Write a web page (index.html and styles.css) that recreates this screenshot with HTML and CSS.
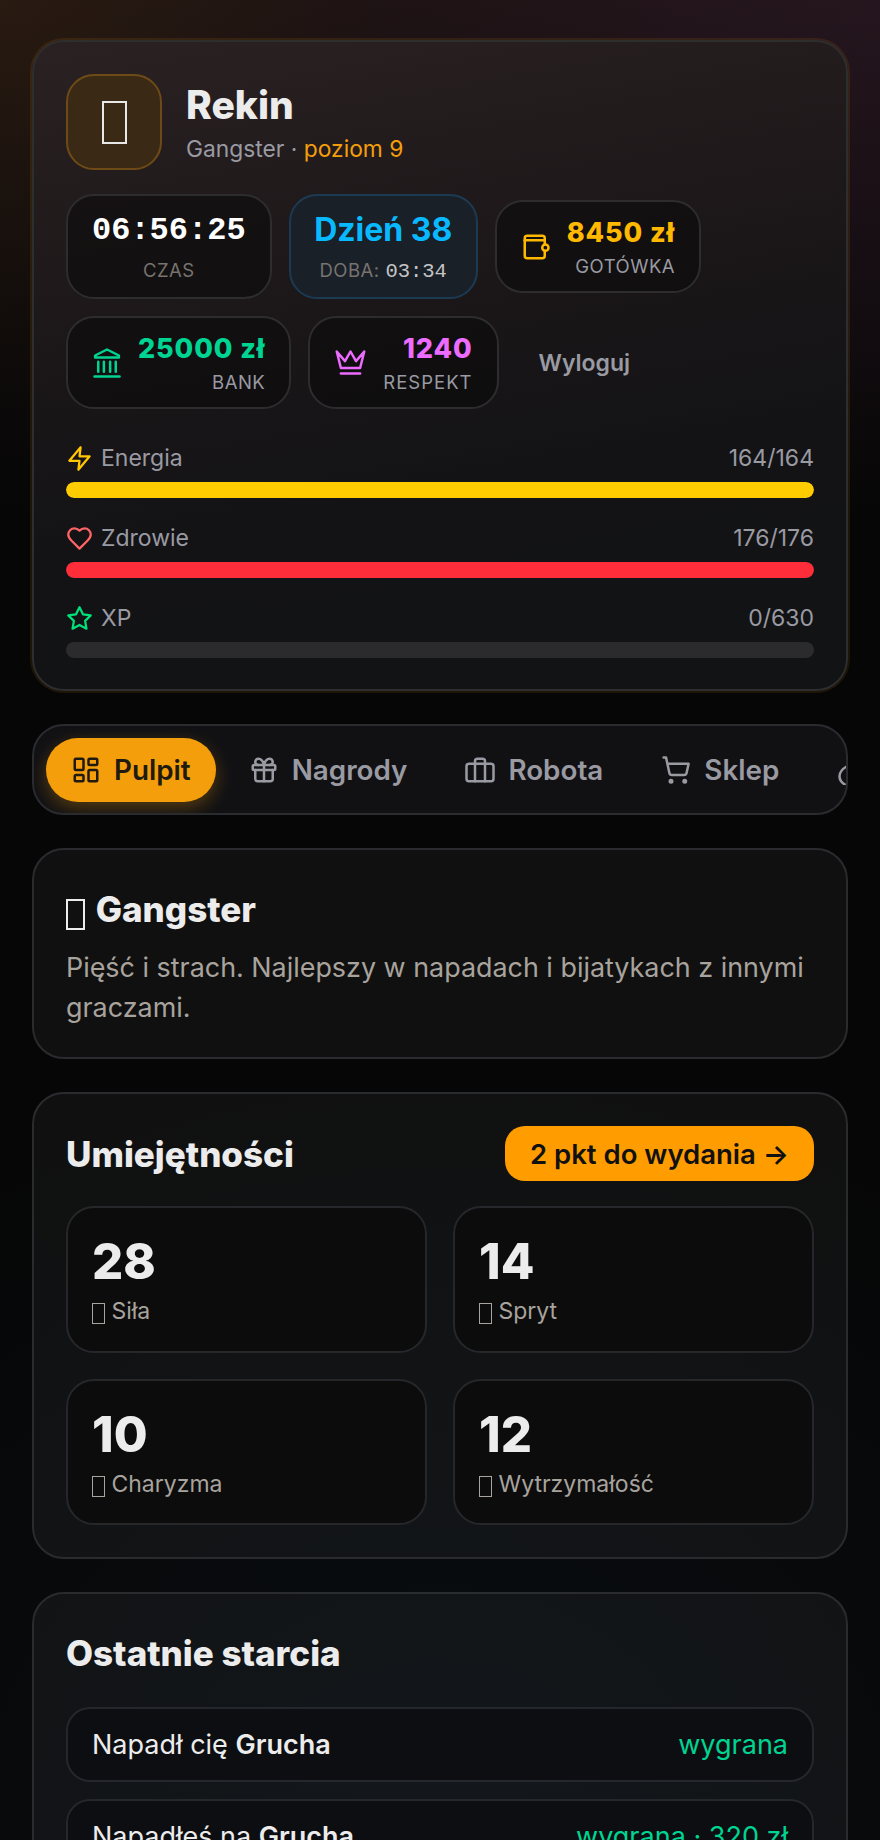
FILE: index.html
```html
<!DOCTYPE html>
<html lang="pl">
<head>
    <meta charset="UTF-8">
    <meta name="viewport" content="width=device-width, initial-scale=1.0">
    <title>Rekin</title>
    <link rel="stylesheet" href="styles.css">
</head>
<body>

    <div class="container">
        <header class="player-card">
            <div class="player">
                <div class="avatar"><span class="tofu tofu-lg"></span></div>
                <div>
                    <h1>Rekin</h1>
                    <p class="player-sub">Gangster · <span class="level">poziom 9</span></p>
                </div>
            </div>

            <div class="stats">
                <div class="stat stat-center">
                    <div class="clock">06:56:25</div>
                    <div class="stat-label">CZAS</div>
                </div>
                <div class="stat stat-center stat-day">
                    <div class="day">Dzień 38</div>
                    <div class="stat-label">DOBA: <span class="mono">03:34</span></div>
                </div>
                <div class="stat stat-money">
                    <svg class="stat-icon gold" viewBox="0 0 24 24"><path d="M19 10V5a2 2 0 0 0-2-2H5a2 2 0 0 0-2 2v14a2 2 0 0 0 2 2h12a2 2 0 0 0 2-2v-4"/><path d="M3 6.500h16"/><rect x="17" y="10" width="5" height="5" rx="2.500"/></svg>
                    <div class="stat-text">
                        <div class="stat-value gold">8450 zł</div>
                        <div class="stat-label">GOTÓWKA</div>
                    </div>
                </div>
                <div class="stat stat-money">
                    <svg class="stat-icon green" viewBox="0 0 24 24"><path d="M12 1.200 21.500 6v1.600h-19V6z"/><path d="M2 22.800h20"/><path d="M5 11v8"/><path d="M9.500 11v8"/><path d="M14.500 11v8"/><path d="M19 11v8"/></svg>
                    <div class="stat-text">
                        <div class="stat-value green">25000 zł</div>
                        <div class="stat-label">BANK</div>
                    </div>
                </div>
                <div class="stat stat-money">
                    <svg class="stat-icon stat-icon-lg pink" viewBox="0 0 24 24"><path d="m2 4 3 12h14l3-12-6 7-4-7-4 7-6-7z"/><path d="M5 20h14"/></svg>
                    <div class="stat-text">
                        <div class="stat-value pink">1240</div>
                        <div class="stat-label label-wide">RESPEKT</div>
                    </div>
                </div>
                <a class="logout">Wyloguj</a>
            </div>

            <div class="bars">
                <div class="bar-row">
                    <div class="bar-head">
                        <span class="bar-name"><svg class="bar-icon gold-bar" viewBox="0 0 24 24"><path d="M13 2 3 14h9l-1 8 10-12h-9l1-8z"/></svg>Energia</span>
                        <span>164/164</span>
                    </div>
                    <div class="bar"><div class="bar-fill fill-energy" style="width: 100%"></div></div>
                </div>
                <div class="bar-row">
                    <div class="bar-head">
                        <span class="bar-name"><svg class="bar-icon red-bar" viewBox="0 0 24 24"><path d="M19 14c1.490-1.460 3-3.210 3-5.500A5.500 5.500 0 0 0 16.500 3c-1.760 0-3 .5-4.500 2-1.500-1.500-2.740-2-4.500-2A5.500 5.500 0 0 0 2 8.500c0 2.300 1.500 4.050 3 5.500l7 7Z"/></svg>Zdrowie</span>
                        <span>176/176</span>
                    </div>
                    <div class="bar"><div class="bar-fill fill-health" style="width: 100%"></div></div>
                </div>
                <div class="bar-row">
                    <div class="bar-head">
                        <span class="bar-name"><svg class="bar-icon green-bar" viewBox="0 0 24 24"><path d="M12 2l3.090 6.260L22 9.270l-5 4.870 1.180 6.880L12 17.770l-6.180 3.250L7 14.140 2 9.270l6.910-1.010L12 2z"/></svg>XP</span>
                        <span>0/630</span>
                    </div>
                    <div class="bar"><div class="bar-fill" style="width: 0%"></div></div>
                </div>
            </div>
        </header>

        <nav class="tabs">
            <a class="tab active"><svg viewBox="0 0 24 24"><rect x="3" y="3" width="7" height="9" rx="1"/><rect x="14" y="3" width="7" height="5" rx="1"/><rect x="14" y="12" width="7" height="9" rx="1"/><rect x="3" y="16" width="7" height="5" rx="1"/></svg>Pulpit</a>
            <a class="tab"><svg viewBox="0 0 24 24"><rect x="3" y="8" width="18" height="4" rx="1"/><path d="M12 8v13"/><path d="M19 12v7a2 2 0 0 1-2 2H7a2 2 0 0 1-2-2v-7"/><path d="M7.500 8a2.500 2.500 0 0 1 0-5A4.800 8 0 0 1 12 8a4.800 8 0 0 1 4.500-5 2.500 2.500 0 0 1 0 5"/></svg>Nagrody</a>
            <a class="tab"><svg viewBox="0 0 24 24"><rect x="1.200" y="7" width="21.600" height="14" rx="2"/><path d="M16 21V5a2 2 0 0 0-2-2h-4a2 2 0 0 0-2 2v16"/></svg>Robota</a>
            <a class="tab"><svg viewBox="0 0 24 24"><circle cx="8" cy="21" r="1"/><circle cx="19" cy="21" r="1"/><path d="M2.050 2.050h2l2.660 12.420a2 2 0 0 0 2 1.580h9.780a2 2 0 0 0 1.950-1.570l1.650-7.430H5.120"/></svg>Sklep</a>
            <a class="tab"><svg viewBox="0 0 24 24"><path d="M9 8.500C4 11 2 14 2 17c0 3 2 5.500 5 7"/></svg></a>
        </nav>

        <section class="card card-spaced">
            <h2><span class="tofu tofu-md"></span> Gangster</h2>
            <p class="card-text">Pięść i strach. Najlepszy w napadach i bijatykach z innymi graczami.</p>
        </section>

        <section class="card">
            <div class="card-head">
                <h2>Umiejętności</h2>
                <a class="spend-btn">2 pkt do wydania →</a>
            </div>
            <div class="skills">
                <div class="skill">
                    <div class="skill-value">28</div>
                    <div class="skill-name"><span class="tofu tofu-sm"></span> Siła</div>
                </div>
                <div class="skill">
                    <div class="skill-value">14</div>
                    <div class="skill-name"><span class="tofu tofu-sm"></span> Spryt</div>
                </div>
                <div class="skill">
                    <div class="skill-value">10</div>
                    <div class="skill-name"><span class="tofu tofu-sm"></span> Charyzma</div>
                </div>
                <div class="skill">
                    <div class="skill-value">12</div>
                    <div class="skill-name"><span class="tofu tofu-sm"></span> Wytrzymałość</div>
                </div>
            </div>
        </section>

        <section class="card card-spaced">
            <h2 class="fights-title">Ostatnie starcia</h2>
            <div class="fights">
                <div class="fight">
                    <span>Napadł cię <b>Grucha</b></span>
                    <span class="win">wygrana</span>
                </div>
                <div class="fight">
                    <span>Napadłeś na <b>Grucha</b></span>
                    <span class="win">wygrana · 320 zł</span>
                </div>
            </div>
        </section>
    </div>

</body>
</html>
```

FILE: styles.css
```css
:root {
    --text-primary: #ececec;
    --text-muted: #9a9aa3;
    --text-soft: #a8a39d;
    --amber: #f59e0b;
}

*, *::before, *::after {
    box-sizing: border-box;
    margin: 0;
    padding: 0;
}

html, body {
    height: 1840px;
    overflow: hidden;
}

body {
    font-family: 'Inter', 'Liberation Sans', sans-serif;
    color: var(--text-primary);
    background:
        radial-gradient(ellipse 420px 420px at 0 0, rgba(245, 158, 11, 0.06), transparent 100%),
        radial-gradient(ellipse 620px 520px at 100% 0, rgba(190, 80, 230, 0.06), transparent 100%),
        linear-gradient(to bottom, rgba(46, 28, 28, 0.55), transparent 520px),
        radial-gradient(ellipse 900px 800px at 50% 100%, rgba(60, 130, 200, 0.06), transparent 100%),
        #060606;
}

.container {
    display: flex;
    flex-direction: column;
    gap: 33px;
    padding: 40px 32px;
}

/* emoji that have no glyph show up as an empty box */
.tofu {
    display: inline-block;
    border: 2px solid currentColor;
    vertical-align: middle;
}

.tofu-lg {
    width: 25px;
    height: 43px;
    color: #e8e8e8;
}

.tofu-md {
    width: 19px;
    height: 31px;
    margin-right: 3px;
    position: relative;
    top: 2px;
}

.tofu-sm {
    width: 13px;
    height: 21px;
    position: relative;
    top: 1px;
    border-width: 1.5px;
}

.player-card {
    padding: 32px 32px 31px;
    border: 2px solid #2f2e2f;
    border-radius: 32px;
    box-shadow: 0 0 0 2px rgba(245, 158, 11, 0.1);
    background: linear-gradient(170deg, #2a2122 0%, #1c1719 38%, #131315 65%, #121315 100%);
}

.player {
    display: flex;
    align-items: center;
    gap: 24px;
    margin-bottom: 24px;
}

.avatar {
    width: 96px;
    height: 96px;
    display: flex;
    align-items: center;
    justify-content: center;
    border: 2px solid #6e4b16;
    border-radius: 28px;
    background: #3a2a15;
}

h1 {
    font-size: 39px;
    line-height: 46px;
    font-weight: 800;
}

.player-sub {
    margin-top: 7px;
    font-size: 22.800px;
    color: var(--text-muted);
}

.level {
    color: var(--amber);
}

.stats {
    display: flex;
    flex-wrap: wrap;
    align-items: center;
    gap: 17px;
}

.stat {
    border: 2px solid #2d2c2e;
    border-radius: 28px;
    background: rgba(8, 8, 8, 0.5);
}

.stat-center {
    height: 105px;
    padding: 0 24px;
    display: flex;
    flex-direction: column;
    align-items: center;
    justify-content: center;
    gap: 10px;
}

.stat-day {
    padding: 0 23.500px;
    border-color: #1c3a52;
    background: #1a2028;
}

.clock {
    font-family: 'Liberation Mono', monospace;
    font-size: 32px;
    font-weight: 700;
    color: #fff;
}

.day {
    font-size: 32px;
    font-weight: 700;
    color: #09b9ff;
}

.mono {
    font-family: 'Liberation Mono', monospace;
    font-size: 20.500px;
    letter-spacing: 0;
    color: #c4c4c4;
}

.stat-label {
    font-size: 18.500px;
    letter-spacing: 0.5px;
    color: #77736f;
}

.label-wide {
    letter-spacing: 1px;
}

.stat-money {
    height: 93px;
    padding: 0 24px;
    display: flex;
    align-items: center;
    gap: 16px;
}

.stat-text {
    display: flex;
    flex-direction: column;
    align-items: flex-end;
    gap: 6px;
}

.stat-text .stat-label {
    color: var(--text-muted);
}

.stat-value {
    font-size: 27px;
    font-weight: 800;
    letter-spacing: 0.9px;
}

.stat-icon {
    width: 30px;
    height: 30px;
    fill: none;
    stroke: currentColor;
    stroke-width: 2;
    stroke-linecap: round;
    stroke-linejoin: round;
    flex-shrink: 0;
}

.stat-icon-lg {
    width: 33px;
    height: 33px;
    stroke-width: 1.800;
}

.gold { color: #ffb900; }
.green { color: #00d492; }
.pink { color: #ed6bff; }

.logout {
    margin-left: 23px;
    font-size: 23px;
    font-weight: 600;
    color: var(--text-muted);
}

.bars {
    margin-top: 37px;
    display: flex;
    flex-direction: column;
    gap: 28px;
}

.bar-head {
    display: flex;
    justify-content: space-between;
    align-items: center;
    height: 24px;
    margin-bottom: 12px;
    font-size: 23px;
    color: var(--text-muted);
}

.bar-name {
    display: flex;
    align-items: center;
    gap: 8px;
}

.bar-icon {
    width: 27px;
    height: 27px;
    fill: none;
    stroke: currentColor;
    stroke-width: 2;
    stroke-linecap: round;
    stroke-linejoin: round;
}

.gold-bar { color: #ffc700; }
.red-bar { color: #ff6467; }
.green-bar { color: #00e07a; }

.bar {
    height: 16px;
    border-radius: 8px;
    background: #2b2b2d;
    overflow: hidden;
}

.bar-fill {
    height: 100%;
    border-radius: 8px;
}

.fill-energy { background: #ffcc00; }
.fill-health { background: #ff2d3a; }

.tabs {
    height: 91px;
    display: flex;
    align-items: center;
    gap: 8px;
    padding: 0 12px;
    border: 2px solid #2a2b2e;
    border-radius: 32px;
    background: #111114;
    overflow: hidden;
}

.tab {
    height: 64px;
    padding: 0 25px;
    display: flex;
    align-items: center;
    gap: 13px;
    flex-shrink: 0;
    border-radius: 32px;
    font-size: 27.800px;
    font-weight: 600;
    color: var(--text-muted);
}

.tab svg {
    width: 30px;
    height: 30px;
    fill: none;
    stroke: currentColor;
    stroke-width: 2;
    stroke-linecap: round;
    stroke-linejoin: round;
}

.tab.active {
    background: var(--amber);
    color: #201a10;
    box-shadow: 0 6px 18px rgba(245, 158, 11, 0.3);
}

.card {
    padding: 32px;
    border: 2px solid #2a2b2e;
    border-radius: 32px;
    background: rgba(255, 255, 255, 0.045);
}

.card-spaced {
    padding-top: 35px;
}

h2 {
    font-size: 35px;
    line-height: 48px;
    font-weight: 800;
}

.card-text {
    margin: 14px 0 -2px;
    font-size: 26.900px;
    line-height: 40px;
    color: var(--text-soft);
}

.card-head {
    display: flex;
    justify-content: space-between;
    align-items: center;
    margin-bottom: 25px;
}

.spend-btn {
    height: 55px;
    padding: 0 25px;
    display: flex;
    align-items: center;
    border-radius: 20px;
    background: #ff9d00;
    color: #111;
    font-size: 27.500px;
    font-weight: 600;
}

.skills {
    display: grid;
    grid-template-columns: 1fr 1fr;
    gap: 26px;
}

.skill {
    height: 146.500px;
    padding: 26px 24px;
    border: 2px solid #26272a;
    border-radius: 28px;
    background: #0c0c0d;
}

.skill-value {
    font-size: 49px;
    line-height: 56px;
    font-weight: 800;
}

.skill-name {
    margin-top: 7px;
    font-size: 23px;
    color: var(--text-soft);
}

.fights-title {
    margin-bottom: 30px;
}

.fights {
    display: flex;
    flex-direction: column;
    gap: 17px;
}

.fight {
    height: 75px;
    padding: 0 24px;
    display: flex;
    justify-content: space-between;
    align-items: center;
    border: 2px solid #24272b;
    border-radius: 24px;
    background: #0c0e11;
    font-size: 27px;
}

.fight b {
    font-weight: 600;
}

.win {
    color: #00d492;
}
```
